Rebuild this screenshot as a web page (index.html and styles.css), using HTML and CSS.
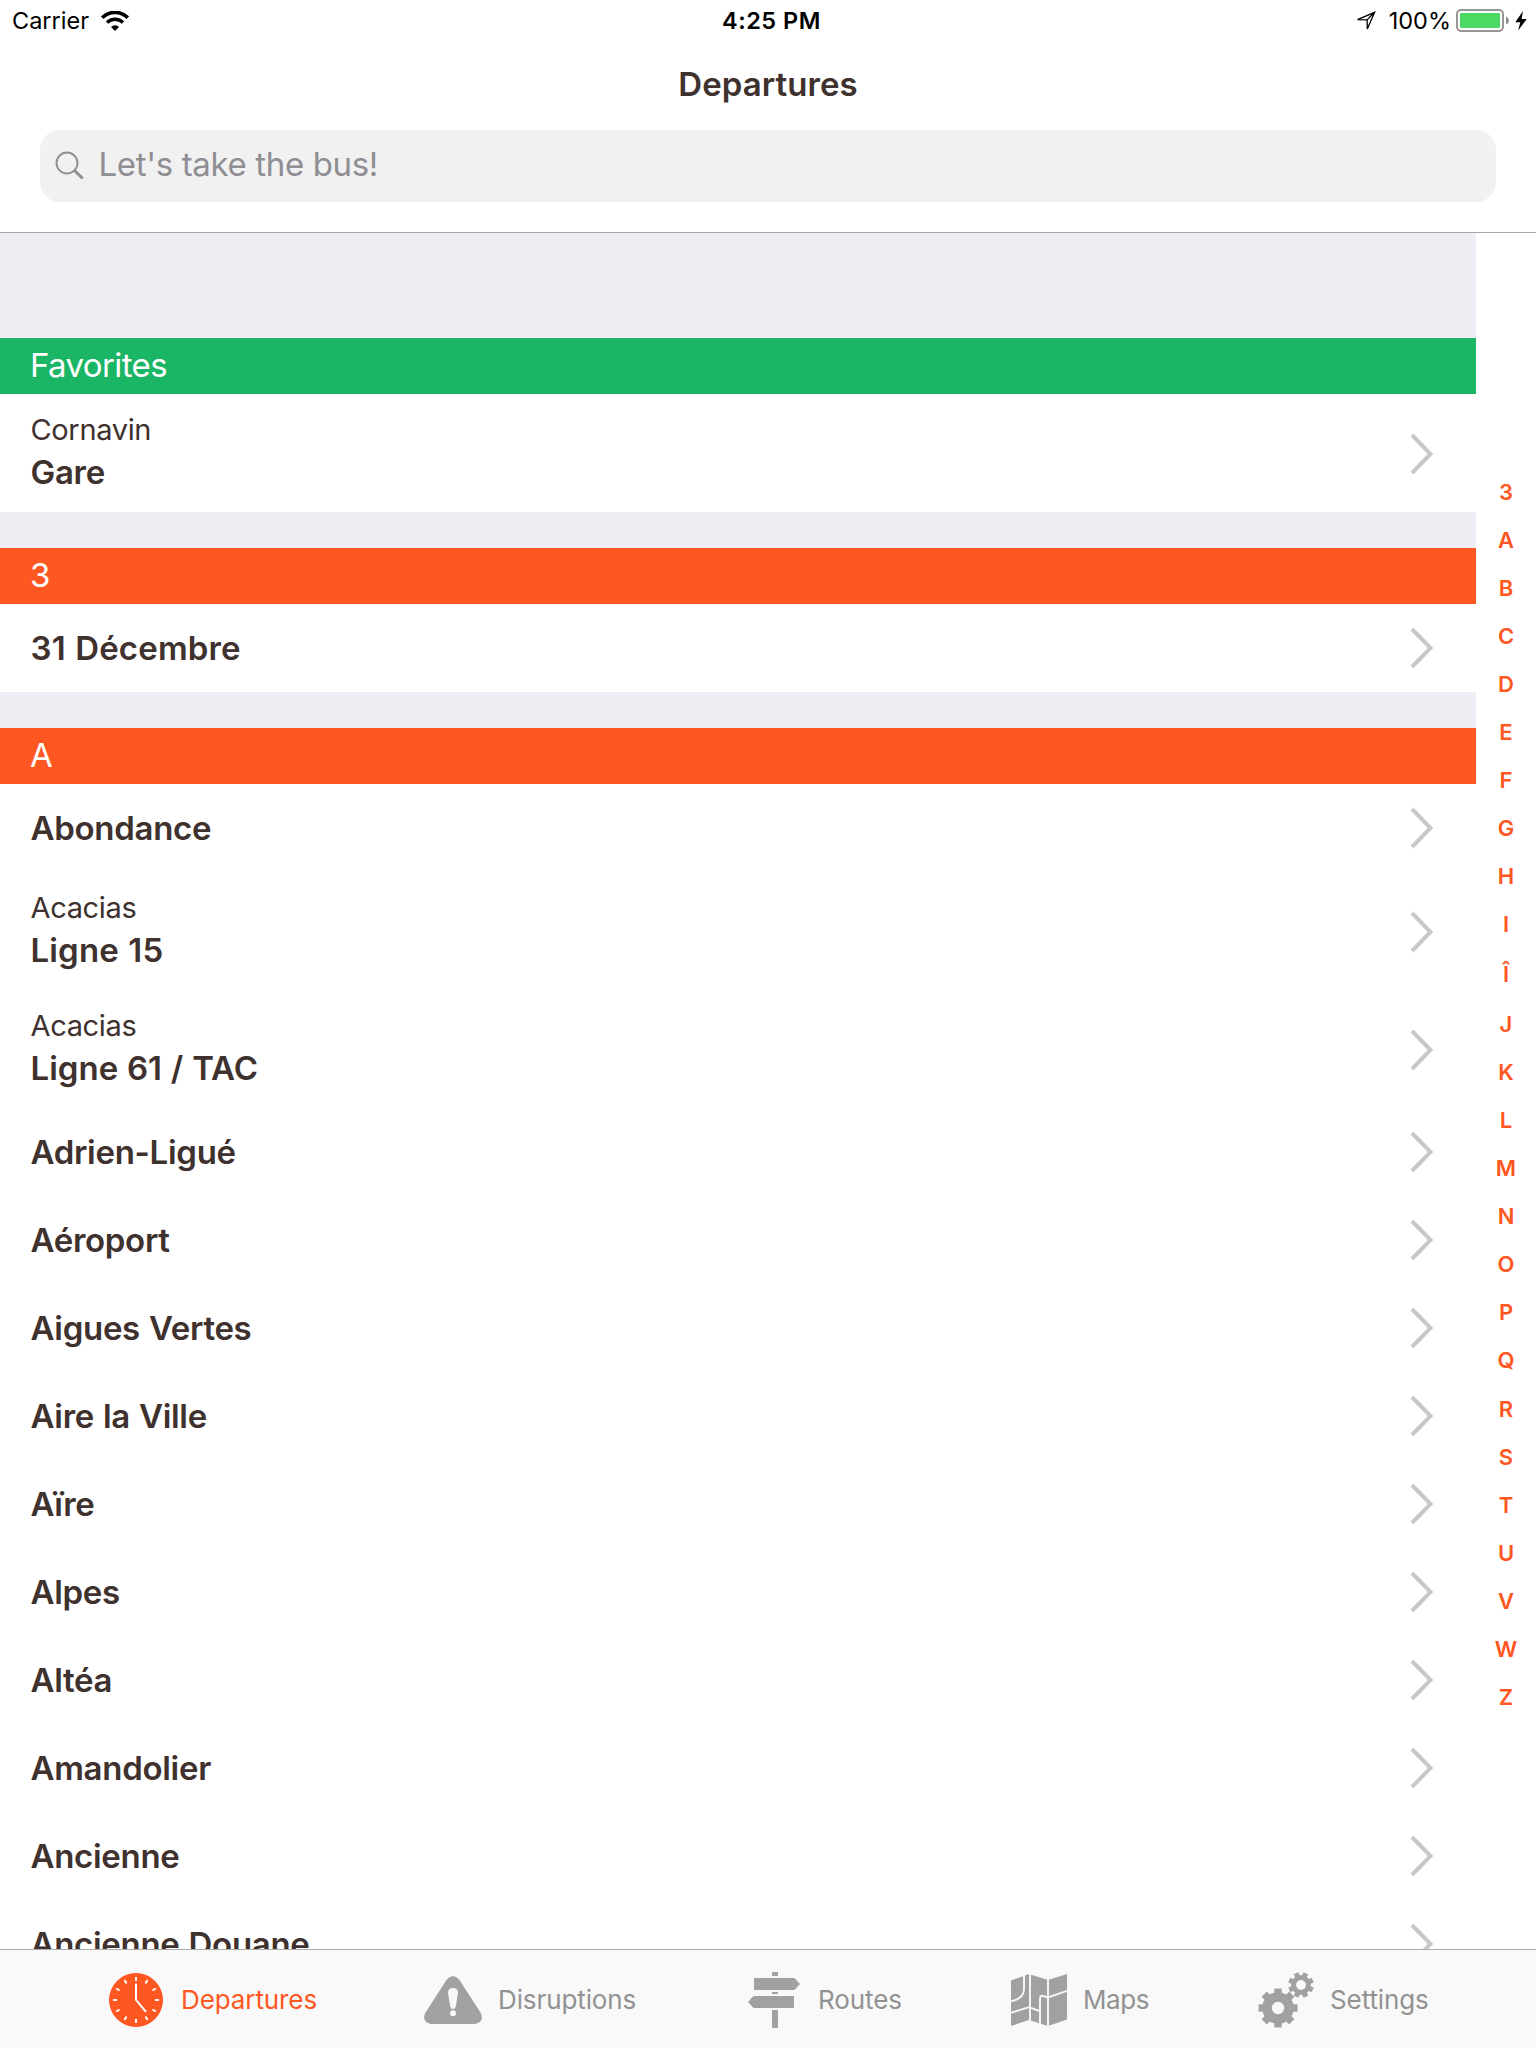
FILE: index.html
```html
<!DOCTYPE html>
<html lang="en">
<head>
<meta charset="utf-8">
<title>Departures</title>
<link rel="stylesheet" href="styles.css">
</head>
<body>
<svg class="defs" aria-hidden="true">
  <symbol id="chevron" viewBox="0 0 24 42"><path d="M2 2 L20.5 21 L2 40" fill="none" stroke="#c8c8ca" stroke-width="4"/></symbol>
</svg>
<div class="screen">
  <header class="header">
    <div class="status">
      <div class="status-left">
        <span class="carrier">Carrier</span>
        <svg class="wifi" width="28" height="20" viewBox="0 0 28 20"><g fill="none" stroke="#000"><path d="M1.2 6.6 A18.2 18.2 0 0 1 26.8 6.6" stroke-width="3.6"/><path d="M6 11.6 A11.4 11.4 0 0 1 22 11.6" stroke-width="3.5"/></g><path d="M14 20 L10 16 A5.6 5.6 0 0 1 18 16 Z"/></svg>
      </div>
      <span class="time">4:25 PM</span>
      <div class="status-right">
        <svg class="location" width="20" height="20" viewBox="0 0 20 20"><path d="M1.5 8.7 L18.6 1.3 L11.3 18 L11.1 8.9 Z M11.1 8.9 L18 1.8" fill="none" stroke="#000" stroke-width="1.3"/></svg>
        <span class="percent">100%</span>
        <svg class="battery" width="54" height="24" viewBox="0 0 54 24"><rect x="1" y="1" width="46" height="21" rx="4" fill="none" stroke="#979797" stroke-width="2"/><rect x="4" y="4" width="40" height="15" rx="1" fill="#4cd964"/><path d="M50 7.5 Q53 9 53 11.7 Q53 14 50 15.5 Z" fill="#8e8e8e"/></svg>
        <svg class="bolt" width="12" height="20" viewBox="0 0 12 20"><path d="M8 0 L0.3 11.3 H5.3 L3.2 19.5 L11.7 8 H6.6 Z"/></svg>
      </div>
    </div>
    <h1 class="title">Departures</h1>
    <div class="search">
      <svg class="search-icon" width="30" height="30" viewBox="0 0 30 30"><circle cx="12" cy="12" r="10.5" fill="none" stroke="#8e8e93" stroke-width="1.9"/><path d="M19.5 19.5 L27.7 27.5" stroke="#8e8e93" stroke-width="3"/></svg>
      <span class="placeholder">Let's take the bus!</span>
    </div>
  </header>
  <main class="content">
    <div class="table">
      <section class="group first">
        <h2 class="heading favorites">Favorites</h2>
        <div class="row tall"><div class="label"><span class="sub">Cornavin</span><span class="name">Gare</span></div><svg class="chevron"><use href="#chevron"/></svg></div>
      </section>
      <section class="group">
        <h2 class="heading">3</h2>
        <div class="row"><span class="name numeric">31 Décembre</span><svg class="chevron"><use href="#chevron"/></svg></div>
      </section>
      <section class="group">
        <h2 class="heading">A</h2>
        <div class="row"><span class="name">Abondance</span><svg class="chevron"><use href="#chevron"/></svg></div>
        <div class="row tall"><div class="label"><span class="sub">Acacias</span><span class="name numeric">Ligne 15</span></div><svg class="chevron"><use href="#chevron"/></svg></div>
        <div class="row tall"><div class="label"><span class="sub">Acacias</span><span class="name numeric route">Ligne 61 / TAC</span></div><svg class="chevron"><use href="#chevron"/></svg></div>
        <div class="row"><span class="name">Adrien-Ligué</span><svg class="chevron"><use href="#chevron"/></svg></div>
        <div class="row"><span class="name">Aéroport</span><svg class="chevron"><use href="#chevron"/></svg></div>
        <div class="row"><span class="name">Aigues Vertes</span><svg class="chevron"><use href="#chevron"/></svg></div>
        <div class="row"><span class="name">Aire la Ville</span><svg class="chevron"><use href="#chevron"/></svg></div>
        <div class="row"><span class="name">Aïre</span><svg class="chevron"><use href="#chevron"/></svg></div>
        <div class="row"><span class="name">Alpes</span><svg class="chevron"><use href="#chevron"/></svg></div>
        <div class="row"><span class="name">Altéa</span><svg class="chevron"><use href="#chevron"/></svg></div>
        <div class="row"><span class="name">Amandolier</span><svg class="chevron"><use href="#chevron"/></svg></div>
        <div class="row"><span class="name">Ancienne</span><svg class="chevron"><use href="#chevron"/></svg></div>
        <div class="row"><span class="name">Ancienne Douane</span><svg class="chevron"><use href="#chevron"/></svg></div>
      </section>
    </div>
    <nav class="index">
      <span>3</span><span>A</span><span>B</span><span>C</span><span>D</span><span>E</span><span>F</span><span>G</span><span>H</span><span>I</span><span class="accented">Î</span><span>J</span><span>K</span><span>L</span><span>M</span><span>N</span><span>O</span><span>P</span><span class="tailed">Q</span><span>R</span><span>S</span><span>T</span><span>U</span><span>V</span><span>W</span><span>Z</span>
    </nav>
  </main>
  <footer class="tabs">
    <div class="tab departures">
      <svg width="54" height="54" viewBox="0 0 54 54"><circle cx="27" cy="27" r="27" fill="#ff5722"/><path d="M27 10.5 V27 L37 38.8" fill="none" stroke="#fff" stroke-width="2"/><g stroke="#fff" stroke-width="2"><path id="tick" d="M27 4 V8"/><use href="#tick" transform="rotate(30 27 27)"/><use href="#tick" transform="rotate(60 27 27)"/><use href="#tick" transform="rotate(90 27 27)"/><use href="#tick" transform="rotate(120 27 27)"/><use href="#tick" transform="rotate(150 27 27)"/><use href="#tick" transform="rotate(180 27 27)"/><use href="#tick" transform="rotate(210 27 27)"/><use href="#tick" transform="rotate(240 27 27)"/><use href="#tick" transform="rotate(270 27 27)"/><use href="#tick" transform="rotate(300 27 27)"/><use href="#tick" transform="rotate(330 27 27)"/></g></svg>
      <span>Departures</span>
    </div>
    <div class="tab disruptions">
      <svg width="58" height="48" viewBox="0 0 58 48"><path d="M22.8 3.5 Q29 -3.5 35.2 3.5 L56.8 37 Q60.5 46 51 48 H7 Q-2.5 46 1.2 37 Z" fill="#a1a1a1"/><path d="M24 17 Q24 12 29 12 Q34 12 34 17 L31.8 30.5 Q31 33 29 33 Q27 33 26.2 30.5 Z" fill="#f8f8f8"/><circle cx="29" cy="37.3" r="3" fill="#f8f8f8"/></svg>
      <span>Disruptions</span>
    </div>
    <div class="tab routes">
      <svg width="52" height="56" viewBox="0 0 52 56"><path fill="#a1a1a1" d="M24 1 Q24 0 25 0 H29 Q30 0 30 1 V4 H24 Z M24 20 H30 V22 H24 Z M24 38 H30 V55 Q30 56 29 56 H25 Q24 56 24 55 Z M7 6 H46 L47 6.5 L52 12 L47 17.5 L46 18 H7 Q6 18 6 17 V7 Q6 6 7 6 Z M45 24 H6 L5 24.5 L0 30 L5 35.5 L6 36 H45 Q46 36 46 35 V25 Q46 24 45 24 Z"/></svg>
      <span>Routes</span>
    </div>
    <div class="tab maps">
      <svg width="56" height="52" viewBox="0 0 56 52"><path d="M0 6.5 L18 0 L37 6 L56 0 V45.5 L37 52 L18 46 L0 52 Z" fill="#a1a1a1"/><g fill="none" stroke="#f8f8f8" stroke-width="1.9"><path d="M19 -1 V53 M37 -1 V53"/><path d="M13 0 V16 Q12 25 0 27.3 M0 38.8 L18 33.2 L28.5 37 M29 50 V25 Q29 21 32 22 L37 23.5 L56 16.8"/></g></svg>
      <span>Maps</span>
    </div>
    <div class="tab settings">
      <svg width="56" height="56" viewBox="0 0 56 56"><g fill="none" stroke="#a1a1a1"><circle cx="20" cy="36" r="11" stroke-width="9.6"/><g stroke-width="7.4"><path d="M20 16.5 V24"/><path d="M20 16.5 V24" transform="rotate(45 20 36)"/><path d="M20 16.5 V24" transform="rotate(90 20 36)"/><path d="M20 16.5 V24" transform="rotate(135 20 36)"/><path d="M20 16.5 V24" transform="rotate(180 20 36)"/><path d="M20 16.5 V24" transform="rotate(225 20 36)"/><path d="M20 16.5 V24" transform="rotate(270 20 36)"/><path d="M20 16.5 V24" transform="rotate(315 20 36)"/></g><circle cx="43" cy="13" r="7.4" stroke-width="5"/><g stroke-width="5"><path d="M43 0.3 V6" transform="rotate(22.5 43 13)"/><path d="M43 0.3 V6" transform="rotate(67.5 43 13)"/><path d="M43 0.3 V6" transform="rotate(112.5 43 13)"/><path d="M43 0.3 V6" transform="rotate(157.5 43 13)"/><path d="M43 0.3 V6" transform="rotate(202.5 43 13)"/><path d="M43 0.3 V6" transform="rotate(247.5 43 13)"/><path d="M43 0.3 V6" transform="rotate(292.5 43 13)"/><path d="M43 0.3 V6" transform="rotate(337.5 43 13)"/></g></g></svg>
      <span>Settings</span>
    </div>
  </footer>
</div>
</body>
</html>
```
FILE: styles.css
```css
* { box-sizing: border-box; }
body { margin: 0; background: #fff; color: #3e312e; font-family: Inter, "Liberation Sans", sans-serif; font-feature-settings: "calt" 0; }
svg { display: block; flex: none; }
.defs { display: none; }
.screen { width: 1536px; height: 2048px; display: flex; flex-direction: column; overflow: hidden; }

.header { flex: none; height: 233px; border-bottom: 1px solid #a7a7aa; }
.status { height: 41px; display: grid; grid-template-columns: 1fr auto 1fr; align-items: center; color: #000; font-size: 23.5px; line-height: 40px; padding: 1px 9px 0 12px; }
.status-left, .status-right { display: flex; align-items: center; }
.status-right { justify-content: flex-end; }
.carrier { letter-spacing: 0; }
.wifi { margin-left: 12px; }
.time { font-weight: 600; letter-spacing: 0.5px; margin-left: 4px; }
.location { margin-right: 13px; }
.percent { margin-right: 5px; }
.bolt { margin-left: 5px; }
.title { margin: 0; height: 89px; line-height: 86px; text-align: center; font-size: 33px; font-weight: 600; letter-spacing: 0.05px; }
.search { margin: 0 40px; height: 72px; border-radius: 20px; background: #f1f1f1; color: #8e8e93; display: flex; align-items: center; padding-left: 15px; font-size: 33px; line-height: 66px; }
.placeholder { margin: 0 0 4px 13.5px; letter-spacing: -0.35px; }

.content { flex: 1; min-height: 0; display: flex; overflow: hidden; }
.table { width: 1476px; background: #efeef4; }
.group { margin-top: 36px; }
.group.first { margin-top: 0; padding-top: 105px; }
.heading { margin: 0; height: 56px; line-height: 55px; padding-left: 30px; background: #ff5722; color: #fff; font-size: 33px; font-weight: 400; letter-spacing: -0.6px; }
.favorites { background: #1bb566; }
.row { height: 88px; display: flex; align-items: center; justify-content: space-between; padding: 0 42px 0 30.5px; background: #fff; }
.row.tall { height: 118px; }
.label { display: flex; flex-direction: column; padding-bottom: 3px; }
.name { font-size: 33px; font-weight: 600; line-height: 44px; letter-spacing: -0.3px; word-spacing: 1px; }
.name.numeric { letter-spacing: 0.15px; }
.name.route { letter-spacing: 0; word-spacing: 0.5px; }
.sub { font-size: 29px; line-height: 40px; letter-spacing: -0.35px; }
.chevron { width: 24px; height: 42px; }
.tall .chevron { margin-top: 2px; }

.index { width: 60px; padding-top: 235px; display: flex; flex-direction: column; color: #ff5722; font-size: 22px; font-weight: 600; line-height: 48px; text-align: center; }
.index .accented { line-height: 52px; }
.index .tailed { line-height: 49px; }

.tabs { flex: none; height: 99px; border-top: 1px solid #acacac; background: #f9f9f9; color: #929292; display: flex; align-items: center; padding: 2px 0 0 109px; font-size: 26px; line-height: 36px; letter-spacing: -0.1px; }
.tab { flex: none; display: flex; align-items: center; gap: 18px; }
.departures { width: 315px; color: #ff5722; }
.disruptions { width: 324px; gap: 16px; }
.routes { width: 263px; }
.maps { width: 247px; gap: 16px; letter-spacing: -0.4px; }
.settings { gap: 16px; }
```
